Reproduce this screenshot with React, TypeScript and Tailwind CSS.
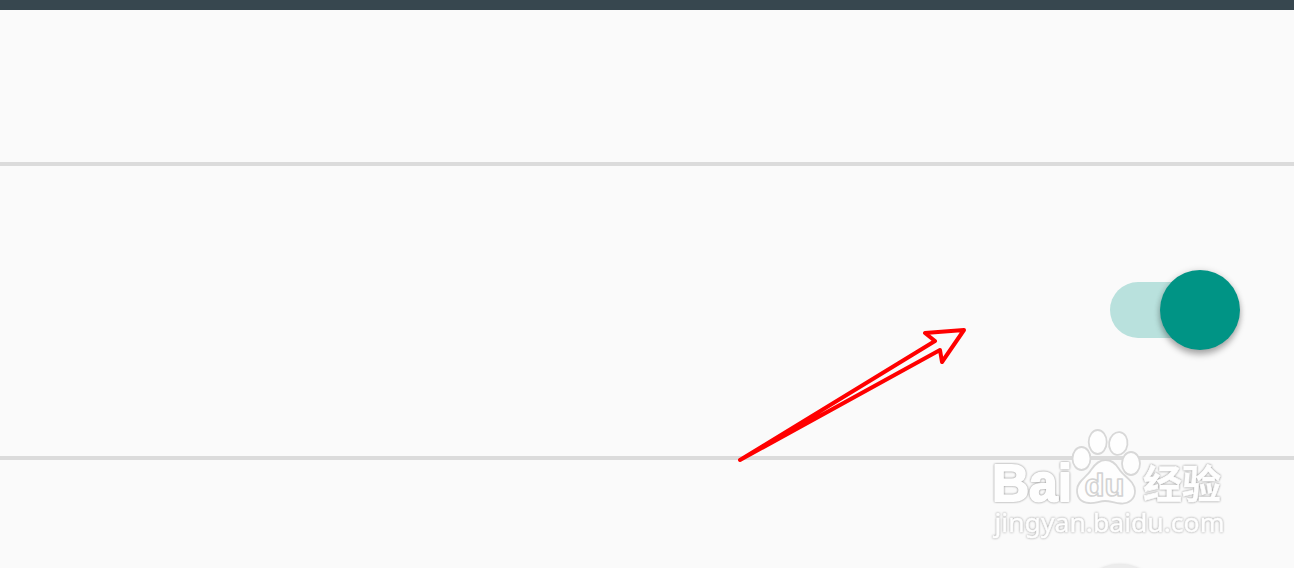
import React from 'react';

interface SwitchProps {
  checked: boolean;
}

const Switch: React.FC<SwitchProps> = ({ checked }) => (
  <div
    role="switch"
    aria-checked={checked}
    className={
      checked
        ? 'flex h-14 w-[122px] shrink-0 items-center rounded-full bg-[#b9e1dd] pl-[50px]'
        : 'mr-[30px] flex h-14 w-[130px] shrink-0 items-center rounded-full bg-[#b2b2b2]'
    }
  >
    <div
      className={
        checked
          ? 'size-20 shrink-0 rounded-full bg-[#009485] shadow-[0_5px_6px_rgba(0,0,0,0.28),0_0_6px_rgba(0,0,0,0.14)]'
          : 'size-20 shrink-0 rounded-full bg-[#ececec] shadow-[0_3px_5px_rgba(0,0,0,0.28),0_0_3px_rgba(0,0,0,0.06)]'
      }
    />
  </div>
);

const Arrow: React.FC = () => (
  <svg
    className="pointer-events-none absolute top-[320px] left-[730px]"
    width="250"
    height="150"
    viewBox="730 320 250 150"
    fill="none"
    stroke="#ff0000"
    strokeWidth="4"
    strokeLinecap="round"
    strokeLinejoin="round"
  >
    <path d="M740 460 L935 341 L925 333 L964 330 L942 362 L940 350 Z" />
  </svg>
);

const Watermark: React.FC = () => (
  <svg
    className="pointer-events-none absolute top-[420px] left-[980px]"
    width="260"
    height="130"
    viewBox="980 420 260 130"
    fill="#fefefe"
    strokeLinejoin="round"
  >
    <g stroke="#fefefe" className="drop-shadow-[0_0_1px_#888888]">
      <text
        x="992"
        y="501"
        fontSize="51"
        fontWeight="700"
        textLength="80"
        lengthAdjust="spacingAndGlyphs"
        strokeWidth="2"
        className="font-['Liberation_Sans',sans-serif]"
      >
        Bai
      </text>
      <text
        x="1143"
        y="498"
        fontSize="39"
        fontWeight="700"
        textLength="78"
        lengthAdjust="spacingAndGlyphs"
        strokeWidth="0.6"
        className="font-['Noto_Sans_CJK_SC',sans-serif]"
      >
        经验
      </text>
    </g>
    <text
      x="994.5"
      y="532"
      fontSize="25"
      textLength="230"
      lengthAdjust="spacingAndGlyphs"
      stroke="#fefefe"
      strokeWidth="0.5"
      className="font-['Noto_Sans',sans-serif] drop-shadow-[0_0_1px_#999999]"
    >
      jingyan.baidu.com
    </text>
    <g stroke="#d8d8d8" strokeWidth="1.8">
      <ellipse cx="1081.5" cy="458.5" rx="9" ry="11.5" />
      <ellipse cx="1097.7" cy="442" rx="9" ry="12" />
      <ellipse cx="1118.3" cy="443.5" rx="9.2" ry="11.5" transform="rotate(8 1118.3 443.5)" />
      <ellipse cx="1131" cy="463.5" rx="9" ry="11.5" />
      <path d="M1105.500 460 C1112 460 1116 464 1119 469 C1123 476 1135 481 1135 491 C1135 499 1129 504 1121 503.500 C1114 503 1111 501 1105 501 C1099 501 1096 503.500 1089 503 C1081 502.500 1077 498 1077 490 C1077 481 1087 477 1091 470 C1095 464 1099 460 1105.500 460 Z" />
    </g>
    <text
      x="1084.5"
      y="496"
      fontSize="32"
      fontWeight="700"
      textLength="40"
      lengthAdjust="spacingAndGlyphs"
      stroke="#d3d3d3"
      strokeWidth="1.6"
      className="font-['Liberation_Sans',sans-serif]"
    >
      du
    </text>
  </svg>
);

const App: React.FC = () => {
  return (
    <div className="relative flex h-[568px] w-full flex-col overflow-hidden bg-[#fafafa]">
      <header className="h-2.5 shrink-0 bg-[#37474f]" />
      <main className="flex flex-col">
        <section className="h-[156px] shrink-0 border-b-4 border-[#dbdbdb]" />
        <section className="flex h-[294px] shrink-0 items-center justify-end border-b-4 border-[#dbdbdb] pr-[62px] pb-0.5">
          <Switch checked={true} />
        </section>
        <section className="flex h-[288px] shrink-0 items-center justify-end pr-[54px]">
          <Switch checked={false} />
        </section>
      </main>
      <Arrow />
      <Watermark />
    </div>
  );
};

export default App;
